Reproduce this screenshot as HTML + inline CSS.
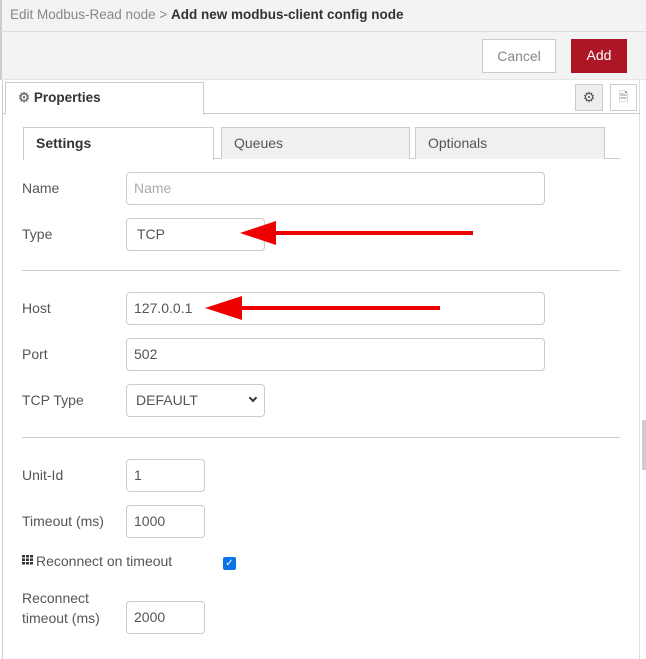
<!DOCTYPE html>
<html><head><style>
*{box-sizing:border-box}
body{margin:0;width:646px;height:659px;overflow:hidden;background:#fff;font-family:"Liberation Sans",sans-serif;font-size:14px;color:#555;position:relative}
.abs{position:absolute}
.hdr{left:0;top:0;width:646px;height:32px;background:#f3f3f3;border-bottom:1px solid #ddd;border-left:2px solid #ccc}
.bar{left:0;top:32px;width:646px;height:48px;background:#f3f3f3;border-left:2px solid #ccc;border-bottom:1px solid #e6e6e6}
.btn{height:34px;line-height:32px;text-align:center;font-size:14px}
.inp{border:1px solid #ccc;border-radius:4px;height:33px;padding-left:7px;line-height:31px;color:#555;background:#fff}
.lbl{left:22px;color:#555}
.tab{height:32px;border:1px solid #ccc;border-bottom:none;background:#f0f0f0;line-height:30px;padding-left:12px;color:#555}
.hr{left:22px;width:598px;height:1px;background:#ccc}
</style></head><body>
<div class="abs hdr"><span class="abs" style="left:8px;top:7px;color:#888;font-size:13.5px">Edit Modbus-Read node &gt; <b style="color:#333">Add new modbus-client config node</b></span></div>
<div class="abs bar"></div>
<div class="abs btn" style="left:482px;top:39px;width:74px;border:1px solid #ccc;background:#fff;color:#888">Cancel</div>
<div class="abs btn" style="left:571px;top:39px;width:56px;background:#ad1625;color:#fff">Add</div>
<div class="abs" style="left:2px;top:80px;width:638px;height:579px;border-left:1px solid #ccc;border-right:1px solid #ddd"></div>
<div class="abs" style="left:2px;top:113px;width:638px;height:1px;background:#ccc"></div>
<div class="abs" style="left:5px;top:82px;width:199px;height:33px;background:#fff;border:1px solid #ccc;border-bottom:none;line-height:30px;padding-left:12px;font-weight:bold;color:#333;font-size:13.5px"><span style="color:#777">⚙</span> Properties</div>
<div class="abs" style="left:575px;top:84px;width:28px;height:27px;background:#eee;border:1px solid #ccc;text-align:center;line-height:25px;color:#555">⚙</div>
<div class="abs" style="left:610px;top:84px;width:27px;height:27px;background:#fff;border:1px solid #ccc;text-align:center;line-height:25px;color:#888;font-size:12px">🗎</div>
<div class="abs" style="left:23px;top:158px;width:597px;height:1px;background:#ccc"></div>
<div class="abs tab" style="left:23px;top:127px;width:191px;height:33px;background:#fff;font-weight:bold;color:#333">Settings</div>
<div class="abs tab" style="left:221px;top:127px;width:189px">Queues</div>
<div class="abs tab" style="left:415px;top:127px;width:190px">Optionals</div>
<span class="abs lbl" style="top:180px">Name</span><div class="abs inp" style="left:126px;top:172px;width:419px;color:#aaa">Name</div>
<span class="abs lbl" style="top:226px">Type</span><div class="abs inp" style="left:126px;top:218px;width:139px;padding-left:10px">TCP</div>
<div class="abs hr" style="top:270px"></div>
<span class="abs lbl" style="top:300px">Host</span><div class="abs inp" style="left:126px;top:292px;width:419px">127.0.0.1</div>
<span class="abs lbl" style="top:346px">Port</span><div class="abs inp" style="left:126px;top:338px;width:419px">502</div>
<span class="abs lbl" style="top:392px">TCP Type</span><div class="abs inp" style="left:126px;top:384px;width:139px;padding-left:9px">DEFAULT</div>
<div class="abs" style="left:250px;top:395px;width:6px;height:6px;border-right:2px solid #333;border-bottom:2px solid #333;transform:rotate(45deg)"></div>
<div class="abs hr" style="top:437px"></div>
<span class="abs lbl" style="top:467px">Unit-Id</span><div class="abs inp" style="left:126px;top:459px;width:79px">1</div>
<span class="abs lbl" style="top:513px">Timeout (ms)</span><div class="abs inp" style="left:126px;top:505px;width:79px">1000</div>
<svg class="abs" style="left:22px;top:555px" width="11" height="10"><g fill="#333"><rect x="0" y="0" width="3" height="2.5"/><rect x="4" y="0" width="3" height="2.5"/><rect x="8" y="0" width="3" height="2.5"/><rect x="0" y="3.5" width="3" height="2.5"/><rect x="4" y="3.5" width="3" height="2.5"/><rect x="8" y="3.5" width="3" height="2.5"/><rect x="0" y="7" width="3" height="2.5"/><rect x="4" y="7" width="3" height="2.5"/><rect x="8" y="7" width="3" height="2.5"/></g></svg>
<span class="abs" style="left:36px;top:553px">Reconnect on timeout</span>
<div class="abs" style="left:223px;top:557px;width:13px;height:13px;background:#0b74e5;border-radius:2px;color:#fff;font-size:10px;line-height:13px;text-align:center">✓</div>
<span class="abs lbl" style="top:588px;line-height:20px">Reconnect<br>timeout (ms)</span><div class="abs inp" style="left:126px;top:601px;width:79px">2000</div>
<div class="abs" style="left:642px;top:420px;width:4px;height:50px;background:#ccc"></div>
<svg class="abs" style="left:0;top:0" width="646" height="659">
<line x1="262" y1="233" x2="473" y2="233" stroke="#e00" stroke-width="4"/>
<polygon points="240,233 276,221 276,245" fill="#e00"/>
<line x1="228" y1="308" x2="440" y2="308" stroke="#e00" stroke-width="4"/>
<polygon points="205,308 242,296 242,320" fill="#e00"/>
</svg>
</body></html>
